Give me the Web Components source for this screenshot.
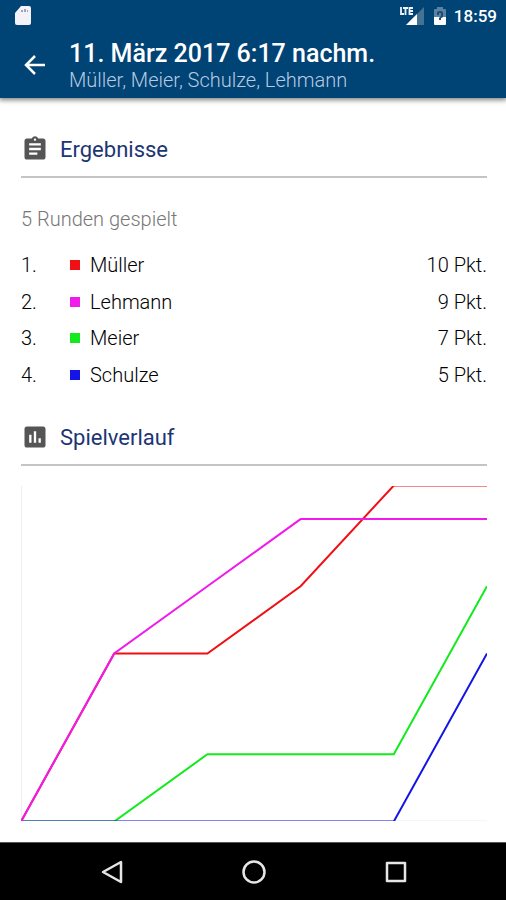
<!DOCTYPE html>
<html lang="de">
<head>
<meta charset="utf-8">
<meta name="viewport" content="width=device-width, initial-scale=1">
<title>Spielergebnis</title>
<style>
html, body { margin: 0; }
body { font-family: Roboto, "Liberation Sans", sans-serif; background: #fff; color: #222; }
</style>
</head>
<body>
<game-screen>
  <status-bar slot="top" time="18:59"></status-bar>
  <app-header slot="top">
    <span slot="title">11. März 2017 6:17 nachm.</span>
    <span slot="subtitle">Müller, Meier, Schulze, Lehmann</span>
  </app-header>
  <section-block>
    <svg slot="icon" viewBox="0 0 24 24" width="28" height="28" fill="#555" aria-hidden="true"><path d="M19 3h-4.180C14.400 1.840 13.300 1 12 1c-1.300 0-2.400.840-2.820 2H5c-1.100 0-2 .900-2 2v14c0 1.100.900 2 2 2h14c1.100 0 2-.900 2-2V5c0-1.100-.900-2-2-2zm-7 0c.550 0 1 .450 1 1s-.450 1-1 1-1-.450-1-1 .450-1 1-1zm2 14H7v-2h7v2zm3-4H7v-2h10v2zm0-4H7V7h10v2z"/></svg>
    <span slot="heading">Ergebnisse</span>
    <score-table rounds="5 Runden gespielt"></score-table>
  </section-block>
  <section-block>
    <svg slot="icon" viewBox="0 0 24 24" width="28" height="28" fill="#555" aria-hidden="true"><path d="M19 3H5c-1.100 0-2 .900-2 2v14c0 1.100.900 2 2 2h14c1.100 0 2-.900 2-2V5c0-1.100-.900-2-2-2zM9 17H7v-7h2v7zm4 0h-2V7h2v10zm4 0h-2v-4h2v4z"/></svg>
    <span slot="heading">Spielverlauf</span>
    <score-chart></score-chart>
  </section-block>
  <nav-bar slot="bottom"></nav-bar>
</game-screen>

<script>
const players = [
  { name: "Müller", color: "#f00f14", scores: [0, 5, 5, 7, 10, 10] },
  { name: "Lehmann", color: "#f01aea", scores: [0, 5, 7, 9, 9, 9] },
  { name: "Meier", color: "#12ea1c", scores: [0, 0, 2, 2, 2, 7] },
  { name: "Schulze", color: "#1414e6", scores: [0, 0, 0, 0, 0, 5] }
];

function define(name, markup) {
  customElements.define(name, class extends HTMLElement {
    constructor() {
      super();
      this.attachShadow({ mode: "open" }).innerHTML =
        typeof markup === "function" ? markup(this) : markup;
    }
  });
}

define("game-screen", `
  <style>
    :host { display: flex; flex-direction: column; min-height: 100vh; }
    .top { background: #004375; box-shadow: 0 1px 5px 1px rgba(0,0,0,.5); }
    main { flex: 1; padding: 33px 19px 20px 21px; display: flex; flex-direction: column; gap: 26px; }
  </style>
  <div class="top"><slot name="top"></slot></div>
  <main><slot></slot></main>
  <slot name="bottom"></slot>
`);

define("status-bar", host => `
  <style>
    :host { display: flex; align-items: center; height: 32px; padding: 0 9px 0 15px; color: #fff; }
    .right { margin-left: auto; display: flex; align-items: center; }
    svg { display: block; }
    time { font-size: 17px; font-weight: 500; line-height: 32px; margin-left: 8px; }
    .battery { margin-left: 10px; }
  </style>
  <svg width="16" height="20" viewBox="0 0 16 20" aria-hidden="true"><path fill="#f3f2f8" d="M6 0h8q2 0 2 2v15q0 2-2 2H2q-2 0-2-2V7z"/><path fill="#9da5bb" d="M6 4h2v2H6zM9 3h2v3H9zM12 4h1v2h-1z"/></svg>
  <div class="right">
    <svg width="24" height="20" viewBox="0 0 24 20" role="img" aria-label="LTE">
      <path fill="#447293" d="M24 1v18H6z"/><path fill="#004375" d="M0 0h15v10H0z"/>
      <path fill="#fff" d="M17 8v11H6z"/>
      <path fill="none" stroke="#eef3fa" stroke-width="1.800" d="M1 1v7h3M3 2h5M5.500 2v7M13 2H9.500v6H13M9.500 5H13"/>
    </svg>
    <svg class="battery" width="12" height="20" viewBox="0 0 12 20" aria-hidden="true">
      <path fill="#5c829f" d="M3 1h6v2h2q1 0 1 1v7H0V4q0-1 1-1h2z"/>
      <path fill="#fff" d="M0 11h12v7q0 1-1 1H1q-1 0-1-1z"/>
      <path fill="#174c77" d="M3 7q0-2 3-2t3 2v3q0 2-2 2v2H5v-2l2-2V7H5v2H3z"/>
    </svg>
    <time>${host.getAttribute("time")}</time>
  </div>
`);

define("app-header", `
  <style>
    :host { display: flex; align-items: center; height: 66px; padding: 0 19px; color: #fff; }
    button { all: unset; width: 32px; height: 32px; margin-right: 18px; display: grid; place-items: center; cursor: pointer; }
    .text { padding-top: 1px; }
    h1 { margin: 0; font-size: 25px; line-height: 28px; font-weight: 500; }
    p { margin: 0; font-size: 20px; line-height: 24px; font-weight: 300; color: #b8cae0; }
  </style>
  <button aria-label="Zurück"><svg width="22" height="20" viewBox="0 0 22 20" fill="none" stroke="#fff" stroke-width="2.500"><path d="M21 10H2M11 1l-9 9 9 9"/></svg></button>
  <div class="text"><h1><slot name="title"></slot></h1><p><slot name="subtitle"></slot></p></div>
`);

define("section-block", `
  <style>
    :host { display: block; }
    header { display: flex; align-items: center; height: 36px; padding-bottom: 9px; border-bottom: 2px solid #c4c4c4; gap: 11px; }
    h2 { margin: 0; padding-top: 2px; font-size: 22px; line-height: 28px; font-weight: 400; color: #1c3574; }
    ::slotted(svg) { display: block; flex: none; }
  </style>
  <header><slot name="icon"></slot><h2><slot name="heading"></slot></h2></header>
  <slot></slot>
`);

define("score-table", host => `
  <style>
    :host { display: block; padding-top: 29px; }
    p { margin: 0 0 16px; font-size: 20px; line-height: 24px; font-weight: 300; color: #777; }
    table { width: 100%; height: 146px; border-collapse: collapse; font-size: 20px; line-height: 24px; font-weight: 300; color: #000; }
    td { padding: 0; }
    .rank { width: 49px; }
    .dot { width: 20px; }
    .dot i { display: block; width: 10px; height: 10px; }
    .points { text-align: right; }
  </style>
  <p>${host.getAttribute("rounds")}</p>
  <table>${players.map((p, i) => `<tr><td class="rank">${i + 1}.</td><td class="dot"><i style="background:${p.color}"></i></td><td>${p.name}</td><td class="points">${p.scores[5]} Pkt.</td></tr>`).join("")}</table>
`);

define("score-chart", () => {
  const w = 466, h = 336;
  const line = p => `<polyline stroke="${p.color}" points="${p.scores.map((s, i) => `${i * w / 5},${h - s * h / 10}`).join(" ")}"/>`;
  return `
  <style>
    :host { display: block; padding-top: 20px; }
    svg { display: block; width: 100%; height: auto; overflow: hidden; }
  </style>
  <svg viewBox="0 0.500 ${w} ${h - 1}" fill="none" stroke-width="2" role="img" aria-label="Spielverlauf">
    <path stroke="#eee" d="M0 0V${h}H${w}"/>
    ${[players[2], players[3], players[0], players[1]].map(line).join("")}
  </svg>`;
});

define("nav-bar", `
  <style>
    :host { display: block; background: #000; border-top: 1px solid #555; }
    nav { display: flex; justify-content: center; gap: 94px; height: 57px; align-items: center; padding-left: 1px; }
    button { all: unset; width: 48px; height: 48px; display: grid; place-items: center; cursor: pointer; }
    svg { display: block; fill: none; stroke: #e6e6e6; stroke-width: 2.500; stroke-linejoin: round; }
  </style>
  <nav>
    <button aria-label="Zurück"><svg width="24" height="24" viewBox="0 0 24 24"><path d="M21 2v20L3 12z"/></svg></button>
    <button aria-label="Startseite"><svg width="24" height="24" viewBox="0 0 24 24"><circle cx="12" cy="12" r="10.500"/></svg></button>
    <button aria-label="Übersicht"><svg width="24" height="24" viewBox="0 0 24 24"><path d="M3 3h18v18H3z"/></svg></button>
  </nav>
`);
</script>
</body>
</html>
